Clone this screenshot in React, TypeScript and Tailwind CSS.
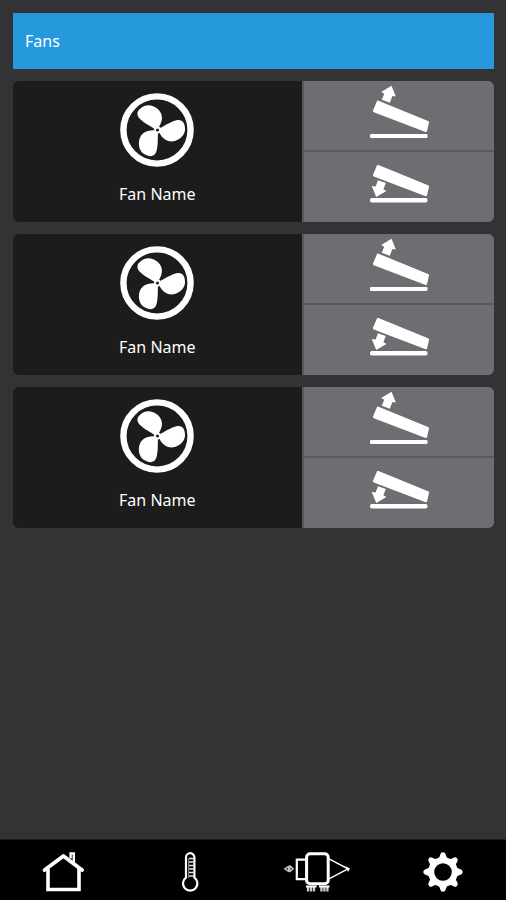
import React from 'react';

interface IconProps {
  className?: string;
}

const fans = [
  { id: 1, name: 'Fan Name' },
  { id: 2, name: 'Fan Name' },
  { id: 3, name: 'Fan Name' },
];

const BLADE = 'M1.5 -1.5 C6 -3.5 12 -8 19 -9.8 C25 -11 27.8 -7 27.5 0 C27 5 23 9 18 10.8 C11 12.8 5.5 10 1.5 2 Z';

function FanIcon({ className }: IconProps) {
  return (
    <svg viewBox="-37 -37 74 74" className={className} fill="currentColor" aria-hidden="true">
      <circle r="33.6" fill="none" stroke="currentColor" strokeWidth="6.4" />
      <g transform="translate(0.5 0)">
        <path d={BLADE} />
        <path d={BLADE} transform="rotate(120)" />
        <path d={BLADE} transform="rotate(240)" />
        <circle r="3.4" />
        <circle r="1.5" fill="#1c1c1c" />
      </g>
    </svg>
  );
}

function FlapOpenIcon({ className }: IconProps) {
  return (
    <svg viewBox="0 0 60 54" className={className} fill="currentColor" aria-hidden="true">
      <path d="M21.5 0.8 L25.9 11.4 L22.4 11 L19.8 17.8 L11.8 14.8 L14.2 8.8 L11.2 7 Z" />
      <path d="M7 16 Q7.5 15.3 8.5 15.7 L58 36 Q59.3 36.6 59 37.6 L57 46.2 Q56.5 47.3 55 46.8 L3.8 27.2 Q2.6 26.5 3 25.5 Z" />
      <rect x="0" y="49" width="57.5" height="4" rx="1.2" />
    </svg>
  );
}

function FlapCloseIcon({ className }: IconProps) {
  return (
    <svg viewBox="0 0 60 38" className={className} fill="currentColor" aria-hidden="true">
      <path d="M7 0.3 Q7.5 -0.2 8.5 0.1 L58 20.2 Q59.3 20.8 59 22 L57 30.4 Q56.5 31.5 55 31 L3.8 11.4 Q2.6 10.7 3 9.8 Z" />
      <path d="M8 15.2 L15.8 18 L13.4 24.2 L16.4 26 L6.2 32 L1.8 21 L5.6 21.6 Z" />
      <rect x="0" y="33" width="57.5" height="4.5" rx="1.8" />
    </svg>
  );
}

function HomeIcon({ className }: IconProps) {
  return (
    <svg viewBox="0 0 42 40" className={className} fill="none" stroke="currentColor" aria-hidden="true">
      <path d="M6 17 V37.5 H37 V17" strokeWidth="3.6" />
      <path d="M2.6 18 L21.4 4 L40 18" strokeWidth="3.8" strokeLinecap="round" strokeLinejoin="round" />
      <path d="M28.6 6.5 V1.4 H31.8 V10" strokeWidth="2.4" />
    </svg>
  );
}

function ThermometerIcon({ className }: IconProps) {
  return (
    <svg viewBox="0 0 18 40" className={className} fill="none" stroke="currentColor" aria-hidden="true">
      <path d="M5 25.6 V5.4 A4.2 4.2 0 0 1 13.4 5.4 V25.6 A7.2 7.2 0 1 1 5 25.6 Z" strokeWidth="2.2" />
      <path d="M7.6 26 V6.5" strokeWidth="0.8" opacity="0.7" />
      <path d="M8 6.5 H12.5 M8 10 H12.5 M8 13.5 H12.5 M8 17 H12.5 M8 20.5 H12.5 M8 24 H12.5" strokeWidth="1.4" opacity="0.9" />
    </svg>
  );
}

function HeaterIcon({ className }: IconProps) {
  return (
    <svg viewBox="0 0 68 40" className={className} fill="none" stroke="currentColor" aria-hidden="true">
      <path d="M24 7.7 H14.8 V27.2 H24" strokeWidth="2.2" />
      <rect x="24.6" y="1.8" width="21.6" height="30" rx="3.5" strokeWidth="3" />
      <path d="M47 6.8 L66 16.8 L47 26.8" strokeWidth="1.5" />
      <path d="M63.5 14.2 L68 16.6 L66 20 Z" fill="currentColor" stroke="none" />
      <path d="M1.5 16.8 L5 14.4 L8 13 L12.2 16.8 L8 20.6 L5 19.2 Z" fill="currentColor" stroke="none" opacity="0.75" />
      <path d="M4.5 16.8 H6 M8.2 16.8 H9.6" stroke="#000" strokeWidth="1.2" />
      <path d="M24 34.5 H34.5 M37 34.5 H47.5" strokeWidth="2" />
      <path d="M26 35 V39.5 M29 35 V39.5 M32 35 V39.5 M39.4 35 V39.5 M42.4 35 V39.5 M45.4 35 V39.5" strokeWidth="2.3" opacity="0.8" />
    </svg>
  );
}

function GearIcon({ className }: IconProps) {
  return (
    <svg viewBox="-20 -20 40 40" className={className} aria-hidden="true">
      <circle r="11.8" fill="none" stroke="currentColor" strokeWidth="6" />
      {[0, 45, 90, 135, 180, 225, 270, 315].map((angle) => (
        <path
          key={angle}
          d="M-5.4 -13 Q-3.2 -14.5 -2.7 -17.5 Q-2.2 -19.7 0 -19.7 Q2.2 -19.7 2.7 -17.5 Q3.2 -14.5 5.4 -13 Z"
          fill="currentColor"
          transform={`rotate(${angle})`}
        />
      ))}
    </svg>
  );
}

function FanCard({ name }: { name: string }) {
  return (
    <li className="grid grid-cols-[3fr_2fr] overflow-hidden rounded-md bg-[#1c1c1c]">
      <div className="flex flex-col items-center pt-3 pb-[18px]">
        <FanIcon className="h-[74px] w-[74px]" />
        <span className="mt-[17px] text-base leading-5">{name}</span>
      </div>
      <div className="grid grid-rows-[69fr_70fr] gap-0.5 bg-[#58595c] pl-0.5">
        <button
          type="button"
          aria-label={`Open ${name}`}
          className="flex cursor-pointer justify-center bg-[#6d6e71] pt-1 pl-0.5 hover:bg-[#77787b]"
        >
          <FlapOpenIcon className="h-[54px] w-[60px]" />
        </button>
        <button
          type="button"
          aria-label={`Close ${name}`}
          className="flex cursor-pointer justify-center bg-[#6d6e71] pt-[13px] pl-0.5 hover:bg-[#77787b]"
        >
          <FlapCloseIcon className="h-[38px] w-[60px]" />
        </button>
      </div>
    </li>
  );
}

const navItems = [
  { label: 'Home', href: '#home', icon: <HomeIcon className="h-10 w-[42px]" /> },
  { label: 'Temperature', href: '#temperature', icon: <ThermometerIcon className="h-10 w-[18px]" /> },
  { label: 'Heater', href: '#heater', icon: <HeaterIcon className="h-10 w-[68px]" /> },
  { label: 'Settings', href: '#settings', icon: <GearIcon className="h-10 w-10" /> },
];

export default function App() {
  return (
    <div className="flex min-h-screen flex-col bg-[#333335] font-['Noto_Sans','Open_Sans',sans-serif] text-white">
      <main className="flex flex-1 flex-col gap-3 pt-[13px] pr-3 pb-3 pl-[13px]">
        <header className="flex h-14 items-center bg-[#2599dc] px-3">
          <h1 className="text-base leading-5">Fans</h1>
        </header>
        <ul className="flex flex-col gap-3">
          {fans.map((fan) => (
            <FanCard key={fan.id} name={fan.name} />
          ))}
        </ul>
      </main>
      <nav className="grid grid-cols-4 border-t border-[#1c1c1d] bg-black pt-3 pb-2">
        {navItems.map((item) => (
          <a key={item.label} href={item.href} aria-label={item.label} className="flex justify-center">
            {item.icon}
          </a>
        ))}
      </nav>
    </div>
  );
}
